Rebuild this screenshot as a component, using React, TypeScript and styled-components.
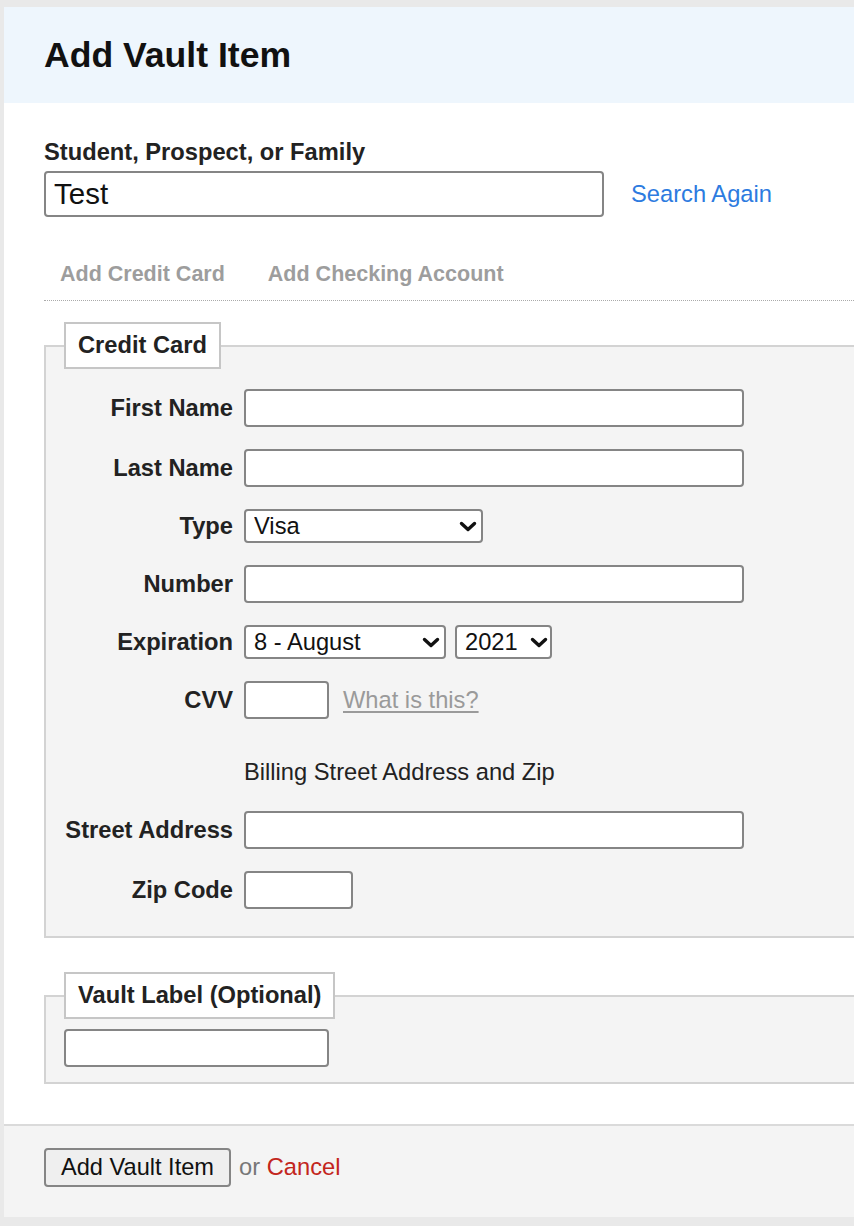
import React from "react";
import styled, { createGlobalStyle } from "styled-components";

const GlobalStyle = createGlobalStyle`
  html, body { margin: 0; padding: 0; }
  body {
    background: #e9e9e9;
    font-family: "Liberation Sans", Arial, Helvetica, sans-serif;
    color: #222;
    overflow: hidden;
  }
  #root { padding: 7px 0 9px 4px; }
`;

const Panel = styled.div`
  background: #fff;
  display: flex;
  flex-direction: column;
`;

const Header = styled.header`
  height: 96px;
  box-sizing: border-box;
  background: #eef6fd;
  display: flex;
  align-items: center;
  padding: 2px 0 0 40px;
`;

const Title = styled.h1`
  margin: 0;
  font-size: 35.6px;
  line-height: 1;
  font-weight: 700;
  color: #111;
`;

const Content = styled.main`
  padding: 35px 0 40px 40px;
`;

const FieldLabel = styled.label`
  display: block;
  font-weight: 700;
  font-size: 23.7px;
  line-height: 28px;
  color: #222;
`;

const SearchRow = styled.div`
  display: flex;
  align-items: center;
  gap: 27px;
  margin-top: 5px;
`;

const SearchInput = styled.input`
  width: 560px;
  height: 46px;
  box-sizing: border-box;
  border: 2px solid #858585;
  border-radius: 4px;
  padding: 0 8px;
  font-family: inherit;
  font-size: 29.5px;
  color: #111;
  background: #fff;
  outline: none;
`;

const BlueLink = styled.a`
  color: #2d7be0;
  font-size: 23.7px;
  text-decoration: none;
`;

const Tabs = styled.nav`
  display: flex;
  gap: 43px;
  margin-top: 44px;
  padding: 0 0 13px 16px;
  border-bottom: 1px dotted #aaa;
`;

const Tab = styled.a`
  font-weight: 700;
  font-size: 21.5px;
  line-height: 26px;
  color: #9d9d9d;
  text-decoration: none;
`;

const Fieldset = styled.fieldset<{ $top: number; $pad: string }>`
  margin: ${(p) => p.$top}px 0 0;
  padding: ${(p) => p.$pad};
  border: 2px solid #d3d3d3;
  border-right: none;
  background: #f4f4f4;
  min-width: 0;
`;

const Legend = styled.legend`
  padding: 0 12px;
  border: 2px solid #c6c6c6;
  background: #fff;
  font-weight: 700;
  font-size: 23.7px;
  line-height: 43px;
  color: #222;
`;

const FormGrid = styled.div`
  display: grid;
  grid-template-columns: 169px 1fr;
  column-gap: 11px;
  row-gap: 22px;
  align-items: center;
`;

const RowLabel = styled.label`
  text-align: right;
  font-weight: 700;
  font-size: 23.7px;
  line-height: 28px;
  color: #222;
  white-space: nowrap;
`;

const TextInput = styled.input<{ $w: number }>`
  width: ${(p) => p.$w}px;
  height: 38px;
  box-sizing: border-box;
  border: 2px solid #858585;
  border-radius: 4px;
  padding: 0 8px;
  background: #fff;
  font-family: inherit;
  font-size: 23.7px;
  outline: none;
`;

const Inline = styled.div<{ $gap: number }>`
  display: flex;
  align-items: center;
  gap: ${(p) => p.$gap}px;
`;

const SelectWrap = styled.div`
  position: relative;
  display: inline-flex;
`;

const Select = styled.select<{ $w: number }>`
  appearance: none;
  -webkit-appearance: none;
  width: ${(p) => p.$w}px;
  height: 34px;
  box-sizing: border-box;
  border: 2px solid #858585;
  border-radius: 4px;
  padding: 0 24px 0 8px;
  background: #fff;
  font-family: inherit;
  font-size: 23.7px;
  color: #111;
  outline: none;
`;

const Chevron = styled.svg<{ $right: number }>`
  position: absolute;
  right: ${(p) => p.$right}px;
  top: 50%;
  margin-top: -5px;
  width: 18px;
  height: 11px;
  pointer-events: none;
`;

const GrayLink = styled.a`
  color: #9a9a9a;
  font-size: 23.7px;
  text-decoration: underline;
  text-underline-offset: 3px;
`;

const Note = styled.div`
  grid-column: 2;
  padding: 17px 0 3px;
  font-size: 23.7px;
  line-height: 28px;
  color: #222;
`;

const Footer = styled.footer`
  border-top: 2px solid #dadada;
  background: #f4f4f4;
  padding: 22px 0 30px 40px;
  display: flex;
  align-items: center;
  gap: 8px;
`;

const Button = styled.button`
  height: 39px;
  padding: 0 15px;
  border: 2px solid #858585;
  border-radius: 4px;
  background: #efefef;
  font-family: inherit;
  font-size: 23.6px;
  color: #111;
`;

const Muted = styled.span`
  color: #777;
  font-size: 23.7px;
`;

const RedLink = styled.a`
  color: #c3261d;
  text-decoration: none;
`;

const Arrow = ({ right }: { right: number }) => (
  <Chevron $right={right} viewBox="0 0 18 11">
    <path
      d="M2.5 2.5 L9 8.5 L15.5 2.5"
      fill="none"
      stroke="#111"
      strokeWidth="3.4"
      strokeLinecap="round"
      strokeLinejoin="round"
    />
  </Chevron>
);

const Dropdown = ({ w, value, options, right = 6 }: { w: number; value: string; options: string[]; right?: number }) => (
  <SelectWrap>
    <Select $w={w} defaultValue={value}>
      {options.map((o) => (
        <option key={o}>{o}</option>
      ))}
    </Select>
    <Arrow right={right} />
  </SelectWrap>
);

export default function App() {
  return (
    <>
      <GlobalStyle />
      <Panel>
        <Header>
          <Title>Add Vault Item</Title>
        </Header>
        <Content>
          <FieldLabel>Student, Prospect, or Family</FieldLabel>
          <SearchRow>
            <SearchInput defaultValue="Test" />
            <BlueLink href="#">Search Again</BlueLink>
          </SearchRow>

          <Tabs>
            <Tab href="#">Add Credit Card</Tab>
            <Tab href="#">Add Checking Account</Tab>
          </Tabs>

          <Fieldset $top={21} $pad="20px 0 27px 18px">
            <Legend>Credit Card</Legend>
            <FormGrid>
              <RowLabel>First Name</RowLabel>
              <TextInput $w={500} />
              <RowLabel>Last Name</RowLabel>
              <TextInput $w={500} />
              <RowLabel>Type</RowLabel>
              <div>
                <Dropdown w={239} value="Visa" options={["Visa", "MasterCard", "American Express", "Discover"]} />
              </div>
              <RowLabel>Number</RowLabel>
              <TextInput $w={500} />
              <RowLabel>Expiration</RowLabel>
              <Inline $gap={9}>
                <Dropdown
                  w={202}
                  value="8 - August"
                  options={[
                    "1 - January",
                    "2 - February",
                    "3 - March",
                    "4 - April",
                    "5 - May",
                    "6 - June",
                    "7 - July",
                    "8 - August",
                    "9 - September",
                    "10 - October",
                    "11 - November",
                    "12 - December",
                  ]}
                />
                <Dropdown w={97} value="2021" right={4} options={["2021", "2022", "2023", "2024", "2025"]} />
              </Inline>
              <RowLabel>CVV</RowLabel>
              <Inline $gap={14}>
                <TextInput $w={85} />
                <GrayLink href="#">What is this?</GrayLink>
              </Inline>
              <Note>Billing Street Address and Zip</Note>
              <RowLabel>Street Address</RowLabel>
              <TextInput $w={500} />
              <RowLabel>Zip Code</RowLabel>
              <TextInput $w={109} />
            </FormGrid>
          </Fieldset>

          <Fieldset $top={34} $pad="10px 0 15px 18px">
            <Legend>Vault Label (Optional)</Legend>
            <TextInput $w={265} />
          </Fieldset>
        </Content>
        <Footer>
          <Button>Add Vault Item</Button>
          <Muted>
            or <RedLink href="#">Cancel</RedLink>
          </Muted>
        </Footer>
      </Panel>
    </>
  );
}
